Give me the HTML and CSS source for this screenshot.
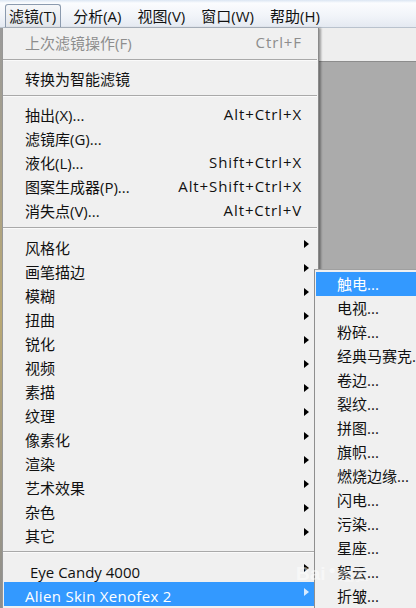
FILE: index.html
```html
<!DOCTYPE html>
<html lang="zh-CN">
<head>
    <meta charset="UTF-8">
    <title>滤镜菜单</title>
    <link rel="stylesheet" href="styles.css">
</head>
<body>
    <header class="menubar">
        <span class="menubar-item active">滤镜(T)</span>
        <span class="menubar-item">分析(A)</span>
        <span class="menubar-item">视图(V)</span>
        <span class="menubar-item">窗口(W)</span>
        <span class="menubar-item">帮助(H)</span>
    </header>

    <div class="workspace">
        <div class="left-edge"></div>

        <!-- Filter menu -->
        <div class="menu">
            <div class="item disabled"><span class="label">上次滤镜操作(F)</span><span class="key">Ctrl+F</span></div>
            <div class="sep"></div>
            <div class="item"><span class="label">转换为智能滤镜</span></div>
            <div class="sep"></div>
            <div class="item"><span class="label">抽出(X)...</span><span class="key">Alt+Ctrl+X</span></div>
            <div class="item"><span class="label">滤镜库(G)...</span></div>
            <div class="item"><span class="label">液化(L)...</span><span class="key">Shift+Ctrl+X</span></div>
            <div class="item"><span class="label">图案生成器(P)...</span><span class="key">Alt+Shift+Ctrl+X</span></div>
            <div class="item"><span class="label">消失点(V)...</span><span class="key">Alt+Ctrl+V</span></div>
            <div class="sep"></div>
            <div class="item sub"><span class="label">风格化</span><span class="arrow"></span></div>
            <div class="item sub"><span class="label">画笔描边</span><span class="arrow"></span></div>
            <div class="item sub"><span class="label">模糊</span><span class="arrow"></span></div>
            <div class="item sub"><span class="label">扭曲</span><span class="arrow"></span></div>
            <div class="item sub"><span class="label">锐化</span><span class="arrow"></span></div>
            <div class="item sub"><span class="label">视频</span><span class="arrow"></span></div>
            <div class="item sub"><span class="label">素描</span><span class="arrow"></span></div>
            <div class="item sub"><span class="label">纹理</span><span class="arrow"></span></div>
            <div class="item sub"><span class="label">像素化</span><span class="arrow"></span></div>
            <div class="item sub"><span class="label">渲染</span><span class="arrow"></span></div>
            <div class="item sub"><span class="label">艺术效果</span><span class="arrow"></span></div>
            <div class="item sub"><span class="label">杂色</span><span class="arrow"></span></div>
            <div class="item sub"><span class="label">其它</span><span class="arrow"></span></div>
            <div class="sep"></div>
            <div class="item sub plugin"><span class="label">Eye Candy 4000</span><span class="arrow"></span></div>
            <div class="item sub selected"><span class="label">Alien Skin Xenofex 2</span><span class="arrow"></span></div>
        </div>

        <div class="right-area">
            <div class="options-bar"></div>
            <div class="canvas-bg"></div>
        </div>
    </div>

    <!-- Xenofex submenu -->
    <div class="submenu">
        <div class="sub-item selected">触电...</div>
        <div class="sub-item">电视...</div>
        <div class="sub-item">粉碎...</div>
        <div class="sub-item">经典马赛克...</div>
        <div class="sub-item">卷边...</div>
        <div class="sub-item">裂纹...</div>
        <div class="sub-item">拼图...</div>
        <div class="sub-item">旗帜...</div>
        <div class="sub-item">燃烧边缘...</div>
        <div class="sub-item">闪电...</div>
        <div class="sub-item">污染...</div>
        <div class="sub-item">星座...</div>
        <div class="sub-item">絮云...</div>
        <div class="sub-item">折皱...</div>
    </div>

    <div class="watermark">Bai<span class="paw">●</span><span class="jy">经验</span></div>
</body>
</html>
```

FILE: styles.css
```css
body {
    margin: 0;
    width: 416px;
    height: 608px;
    overflow: hidden;
    font-family: "Open Sans", "Noto Sans CJK SC", sans-serif;
    font-size: 15px;
    color: #111;
    background-color: #ababab;
    position: relative;
}

.menubar {
    height: 28px;
    display: flex;
    align-items: flex-end;
    padding-left: 5px;
    background: linear-gradient(#dbe6f3 0, #fbfcfe 3px, #f1f4f9 60%, #e4e9f1 100%);
    border-bottom: 1px solid #b9c2cd;
    box-sizing: border-box;
}

.menubar-item {
    height: 23px;
    line-height: 23px;
    padding: 0 4px;
    margin-right: 6px;
    box-sizing: border-box;
    border: 1px solid transparent;
    border-bottom: none;
}

.menubar-item.active {
    border-color: #8b9aae;
    border-radius: 3px 3px 0 0;
    background: linear-gradient(#f6f7f9, #e2e5ea);
    padding: 0 4px 0 3px;
    margin-right: 7px;
}

.workspace {
    display: flex;
    height: 580px;
}

.left-edge {
    width: 2px;
    background: linear-gradient(#9a9a9a, #b9a874 50%, #8e8e8e);
}

.menu {
    width: 317px;
    background-color: #f0f0f0;
    border-left: 1px solid #979797;
    border-right: 1px solid #8a8a8a;
    padding-top: 2px;
    box-sizing: border-box;
    box-shadow: 2px 0 2px rgba(0, 0, 0, 0.35);
    position: relative;
    z-index: 1;
}

.item {
    display: flex;
    align-items: center;
    height: 24px;
    padding: 0 17px 0 22px;
    white-space: nowrap;
}

.item .label {
    flex: 1;
}

.item .key {
    text-align: right;
    letter-spacing: 0.9px;
    margin-right: -1px;
}

.item.disabled {
    color: #8d8d8d;
}

.item.sub .label {
    padding-top: 3px;
}

.item.plugin .label {
    padding-left: 5px;
}

.item.selected {
    background-color: #3399ff;
    color: #fff;
    margin: 0 4px 0 1px;
    padding-left: 21px;
    padding-right: 13px;
    letter-spacing: 0.3px;
}

.arrow {
    width: 0;
    height: 0;
    border-left: 5px solid #000;
    border-top: 4.5px solid transparent;
    border-bottom: 4.5px solid transparent;
    margin-right: -8px;
    margin-top: -5px;
}

.item.selected .arrow {
    border-left-color: #d6eaff;
}

.sep {
    height: 12px;
    display: flex;
    align-items: center;
}

.sep::before {
    content: "";
    flex: 1;
    height: 1px;
    background-color: #a9a9a9;
    border-bottom: 1px solid #fafafa;
    margin: 0 1px 0 0;
}

.right-area {
    flex: 1;
    display: flex;
    flex-direction: column;
}

.options-bar {
    height: 33px;
    background-color: #eeeeee;
    border-bottom: 1px solid #8c8c8c;
}

.canvas-bg {
    flex: 1;
    background-color: #ababab;
}

.submenu {
    position: absolute;
    left: 314px;
    top: 269px;
    width: 120px;
    background-color: #f0f0f0;
    border-left: 1px solid #8f8f8f;
    border-top: 1px solid #a0a0a0;
    padding-top: 2px;
    z-index: 2;
}

.sub-item {
    height: 24px;
    line-height: 25px;
    padding-left: 22px;
    white-space: nowrap;
}

.sub-item.selected {
    background-color: #3399ff;
    color: #fff;
    margin-left: 1px;
    padding-left: 21px;
}

.watermark {
    position: absolute;
    left: 296px;
    top: 563px;
    z-index: 3;
    font-family: "Liberation Sans", "Noto Sans CJK SC", sans-serif;
    font-weight: bold;
    font-size: 19px;
    color: rgba(255, 255, 255, 0.5);
    white-space: nowrap;
}

.watermark .paw {
    font-size: 12px;
    vertical-align: 6px;
    margin: 0 3px;
}

.watermark .jy {
    font-size: 15px;
    color: rgba(255, 255, 255, 0.35);
}
```
